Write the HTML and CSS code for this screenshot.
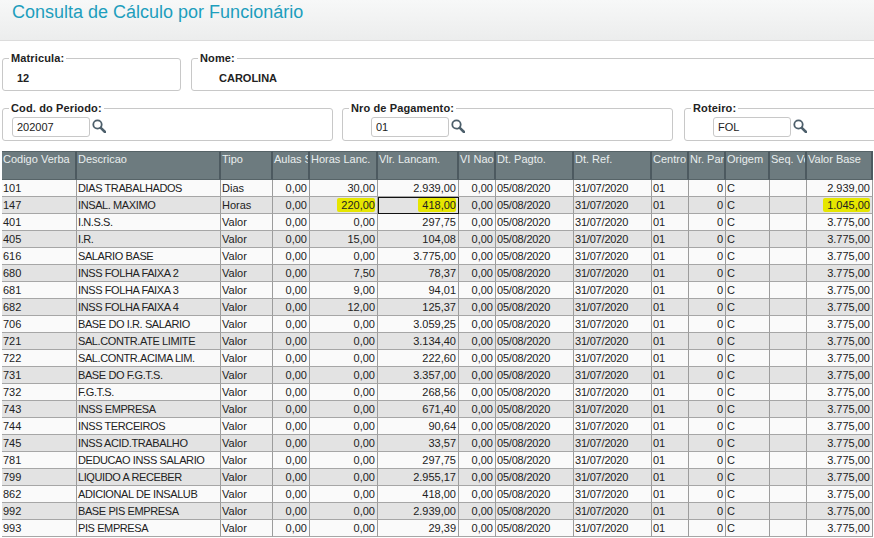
FILE: index.html
```html
<!DOCTYPE html>
<html lang="pt">
<head>
<meta charset="utf-8">
<title>Consulta de Cálculo por Funcionário</title>
<link rel="stylesheet" href="styles.css">
</head>
<body>
<header class="top"><h1>Consulta de Cálculo por Funcionário</h1></header>
<section class="forms">
  <div class="row row-a">
    <fieldset class="box w-mat"><legend>Matricula:</legend><span class="val v-mat">12</span></fieldset>
    <fieldset class="box w-nome"><legend>Nome:</legend><span class="val v-nome">CAROLINA</span></fieldset>
  </div>
  <div class="row row-b">
    <fieldset class="box w-cod"><legend>Cod. do Periodo:</legend>
      <div class="field f-cod"><input class="inp" value="202007" readonly><svg class="lens" viewBox="0 0 14 14"><circle cx="5.5" cy="5.5" r="4.2"/><path class="handle" d="M8.8 8.8 13 13"/></svg></div>
    </fieldset>
    <fieldset class="box w-nro"><legend>Nro de Pagamento:</legend>
      <div class="field f-nro"><input class="inp" value="01" readonly><svg class="lens" viewBox="0 0 14 14"><circle cx="5.5" cy="5.5" r="4.2"/><path class="handle" d="M8.8 8.8 13 13"/></svg></div>
    </fieldset>
    <fieldset class="box w-rot"><legend>Roteiro:</legend>
      <div class="field f-rot"><input class="inp" value="FOL" readonly><svg class="lens" viewBox="0 0 14 14"><circle cx="5.5" cy="5.5" r="4.2"/><path class="handle" d="M8.8 8.8 13 13"/></svg></div>
    </fieldset>
  </div>
</section>
<table class="grid">
<colgroup><col class="c1"><col class="c2"><col class="c3"><col class="c4"><col class="c5"><col class="c6"><col class="c7"><col class="c8"><col class="c9"><col class="c10"><col class="c11"><col class="c12"><col class="c13"><col class="c14"></colgroup>
<thead><tr><th>Codigo Verba</th><th>Descricao</th><th>Tipo</th><th>Aulas S</th><th>Horas Lanc.</th><th>Vlr. Lancam.</th><th>VI Nao.</th><th>Dt. Pagto.</th><th>Dt. Ref.</th><th>Centro</th><th>Nr. Parc</th><th>Origem</th><th>Seq. Ve</th><th>Valor Base</th></tr></thead>
<tbody>
<tr><td>101</td><td class="d">DIAS TRABALHADOS</td><td>Dias</td><td class="n">0,00</td><td class="n">30,00</td><td class="n">2.939,00</td><td class="n">0,00</td><td class="t">05/08/2020</td><td class="t">31/07/2020</td><td>01</td><td class="n">0</td><td>C</td><td></td><td class="n">2.939,00</td></tr>
<tr><td>147</td><td class="d">INSAL. MAXIMO</td><td>Horas</td><td class="n">0,00</td><td class="n"><mark>220,00</mark></td><td class="n sel"><mark>418,00</mark></td><td class="n">0,00</td><td class="t">05/08/2020</td><td class="t">31/07/2020</td><td>01</td><td class="n">0</td><td>C</td><td></td><td class="n"><mark>1.045,00</mark></td></tr>
<tr><td>401</td><td class="d">I.N.S.S.</td><td>Valor</td><td class="n">0,00</td><td class="n">0,00</td><td class="n">297,75</td><td class="n">0,00</td><td class="t">05/08/2020</td><td class="t">31/07/2020</td><td>01</td><td class="n">0</td><td>C</td><td></td><td class="n">3.775,00</td></tr>
<tr><td>405</td><td class="d">I.R.</td><td>Valor</td><td class="n">0,00</td><td class="n">15,00</td><td class="n">104,08</td><td class="n">0,00</td><td class="t">05/08/2020</td><td class="t">31/07/2020</td><td>01</td><td class="n">0</td><td>C</td><td></td><td class="n">3.775,00</td></tr>
<tr><td>616</td><td class="d">SALARIO BASE</td><td>Valor</td><td class="n">0,00</td><td class="n">0,00</td><td class="n">3.775,00</td><td class="n">0,00</td><td class="t">05/08/2020</td><td class="t">31/07/2020</td><td>01</td><td class="n">0</td><td>C</td><td></td><td class="n">3.775,00</td></tr>
<tr><td>680</td><td class="d">INSS FOLHA FAIXA 2</td><td>Valor</td><td class="n">0,00</td><td class="n">7,50</td><td class="n">78,37</td><td class="n">0,00</td><td class="t">05/08/2020</td><td class="t">31/07/2020</td><td>01</td><td class="n">0</td><td>C</td><td></td><td class="n">3.775,00</td></tr>
<tr><td>681</td><td class="d">INSS FOLHA FAIXA 3</td><td>Valor</td><td class="n">0,00</td><td class="n">9,00</td><td class="n">94,01</td><td class="n">0,00</td><td class="t">05/08/2020</td><td class="t">31/07/2020</td><td>01</td><td class="n">0</td><td>C</td><td></td><td class="n">3.775,00</td></tr>
<tr><td>682</td><td class="d">INSS FOLHA FAIXA 4</td><td>Valor</td><td class="n">0,00</td><td class="n">12,00</td><td class="n">125,37</td><td class="n">0,00</td><td class="t">05/08/2020</td><td class="t">31/07/2020</td><td>01</td><td class="n">0</td><td>C</td><td></td><td class="n">3.775,00</td></tr>
<tr><td>706</td><td class="d">BASE DO I.R. SALARIO</td><td>Valor</td><td class="n">0,00</td><td class="n">0,00</td><td class="n">3.059,25</td><td class="n">0,00</td><td class="t">05/08/2020</td><td class="t">31/07/2020</td><td>01</td><td class="n">0</td><td>C</td><td></td><td class="n">3.775,00</td></tr>
<tr><td>721</td><td class="d">SAL.CONTR.ATE LIMITE</td><td>Valor</td><td class="n">0,00</td><td class="n">0,00</td><td class="n">3.134,40</td><td class="n">0,00</td><td class="t">05/08/2020</td><td class="t">31/07/2020</td><td>01</td><td class="n">0</td><td>C</td><td></td><td class="n">3.775,00</td></tr>
<tr><td>722</td><td class="d">SAL.CONTR.ACIMA LIM.</td><td>Valor</td><td class="n">0,00</td><td class="n">0,00</td><td class="n">222,60</td><td class="n">0,00</td><td class="t">05/08/2020</td><td class="t">31/07/2020</td><td>01</td><td class="n">0</td><td>C</td><td></td><td class="n">3.775,00</td></tr>
<tr><td>731</td><td class="d">BASE DO F.G.T.S.</td><td>Valor</td><td class="n">0,00</td><td class="n">0,00</td><td class="n">3.357,00</td><td class="n">0,00</td><td class="t">05/08/2020</td><td class="t">31/07/2020</td><td>01</td><td class="n">0</td><td>C</td><td></td><td class="n">3.775,00</td></tr>
<tr><td>732</td><td class="d">F.G.T.S.</td><td>Valor</td><td class="n">0,00</td><td class="n">0,00</td><td class="n">268,56</td><td class="n">0,00</td><td class="t">05/08/2020</td><td class="t">31/07/2020</td><td>01</td><td class="n">0</td><td>C</td><td></td><td class="n">3.775,00</td></tr>
<tr><td>743</td><td class="d">INSS EMPRESA</td><td>Valor</td><td class="n">0,00</td><td class="n">0,00</td><td class="n">671,40</td><td class="n">0,00</td><td class="t">05/08/2020</td><td class="t">31/07/2020</td><td>01</td><td class="n">0</td><td>C</td><td></td><td class="n">3.775,00</td></tr>
<tr><td>744</td><td class="d">INSS TERCEIROS</td><td>Valor</td><td class="n">0,00</td><td class="n">0,00</td><td class="n">90,64</td><td class="n">0,00</td><td class="t">05/08/2020</td><td class="t">31/07/2020</td><td>01</td><td class="n">0</td><td>C</td><td></td><td class="n">3.775,00</td></tr>
<tr><td>745</td><td class="d">INSS ACID.TRABALHO</td><td>Valor</td><td class="n">0,00</td><td class="n">0,00</td><td class="n">33,57</td><td class="n">0,00</td><td class="t">05/08/2020</td><td class="t">31/07/2020</td><td>01</td><td class="n">0</td><td>C</td><td></td><td class="n">3.775,00</td></tr>
<tr><td>781</td><td class="d">DEDUCAO INSS SALARIO</td><td>Valor</td><td class="n">0,00</td><td class="n">0,00</td><td class="n">297,75</td><td class="n">0,00</td><td class="t">05/08/2020</td><td class="t">31/07/2020</td><td>01</td><td class="n">0</td><td>C</td><td></td><td class="n">3.775,00</td></tr>
<tr><td>799</td><td class="d">LIQUIDO A RECEBER</td><td>Valor</td><td class="n">0,00</td><td class="n">0,00</td><td class="n">2.955,17</td><td class="n">0,00</td><td class="t">05/08/2020</td><td class="t">31/07/2020</td><td>01</td><td class="n">0</td><td>C</td><td></td><td class="n">3.775,00</td></tr>
<tr><td>862</td><td class="d">ADICIONAL DE INSALUB</td><td>Valor</td><td class="n">0,00</td><td class="n">0,00</td><td class="n">418,00</td><td class="n">0,00</td><td class="t">05/08/2020</td><td class="t">31/07/2020</td><td>01</td><td class="n">0</td><td>C</td><td></td><td class="n">3.775,00</td></tr>
<tr><td>992</td><td class="d">BASE PIS EMPRESA</td><td>Valor</td><td class="n">0,00</td><td class="n">0,00</td><td class="n">2.939,00</td><td class="n">0,00</td><td class="t">05/08/2020</td><td class="t">31/07/2020</td><td>01</td><td class="n">0</td><td>C</td><td></td><td class="n">3.775,00</td></tr>
<tr><td>993</td><td class="d">PIS EMPRESA</td><td>Valor</td><td class="n">0,00</td><td class="n">0,00</td><td class="n">29,39</td><td class="n">0,00</td><td class="t">05/08/2020</td><td class="t">31/07/2020</td><td>01</td><td class="n">0</td><td>C</td><td></td><td class="n">3.775,00</td></tr>
</tbody>
</table>
</body>
</html>
```
FILE: styles.css
```css
html, body { margin: 0; padding: 0; background: #fff; overflow: hidden; width: 874px; height: 538px; }
body { font-family: "Liberation Sans", Arial, sans-serif; color: #222; }
.top { height: 40px; background: linear-gradient(#f7f8f8, #eceded); border-bottom: 1px solid #dcdcdc; }
.top h1 { margin: 0; padding: 1px 0 0 12px; font-size: 18px; line-height: 22px; font-weight: 400; color: #1d9ebd; }
.forms { padding: 0 0 0 2px; }
.row { display: flex; }
.row-a { margin-top: 11px; height: 39px; }
.row-b { margin-top: 11px; height: 39px; }
.box { margin: 0; padding: 0; border: 1px solid #c8c8c8; border-radius: 3px; box-sizing: border-box; height: 39px; flex: none; }
.box legend { margin-left: 6px; padding: 0 2px; font-size: 11px; line-height: 13px; font-weight: 700; color: #222; letter-spacing: .13px; }
.w-mat { width: 179px; margin-right: 10px; }
.w-nome { width: 700px; }
.w-cod { width: 331px; margin-right: 9px; }
.w-nro { width: 331px; margin-right: 11px; }
.w-rot { width: 200px; }
.val { display: block; font-size: 11px; font-weight: 700; line-height: 18px; margin-top: 4px; }
.v-mat { padding-left: 14px; }
.v-nome { padding-left: 27px; }
.field { display: flex; align-items: center; gap: 2px; margin-top: 2px; }
.f-cod { padding-left: 9px; }
.f-nro { padding-left: 28px; }
.f-rot { padding-left: 28px; }
.inp { box-sizing: border-box; width: 78px; height: 20px; border: 1px solid #c8c8c8; border-radius: 3px; padding: 0 4px; font: 11px "Liberation Sans", Arial, sans-serif; color: #222; background: #fff; outline: none; }
.lens { width: 14px; height: 14px; fill: none; stroke: #4d5f6b; stroke-width: 1.8; flex: none; margin-bottom: 2px; }
.lens .handle { stroke-width: 2.6; stroke-linecap: round; }
.grid { margin: 10px 0 0 2px; border-collapse: separate; border-spacing: 0; table-layout: fixed; width: 871px; font-size: 11px; }
.c1 { width: 75px; } .c2 { width: 144px; } .c3 { width: 52px; } .c4 { width: 37px; } .c5 { width: 68px; } .c6 { width: 81px; } .c7 { width: 37px; } .c8 { width: 78px; } .c9 { width: 78px; } .c10 { width: 37px; } .c11 { width: 37px; } .c12 { width: 44px; } .c13 { width: 37px; } .c14 { width: 66px; }
.grid th { box-sizing: border-box; height: 29px; background: #6d7b7f; color: #e9eeee; font-weight: 400; text-align: left; vertical-align: top; padding: 1px 0 0 1px; line-height: 13px; white-space: nowrap; overflow: hidden; border-right: 2px solid #4d5a60; border-top: 1px solid #566367; border-bottom: 1px solid #566367; }
.grid td { box-sizing: border-box; height: 17px; padding: 0 1px; line-height: 15px; white-space: nowrap; overflow: hidden; border-right: 1px solid #9c9c9c; border-bottom: 1px solid #a6a6a6; color: #222; }
.grid tbody tr:nth-child(odd) td { background: #fafafa; }
.grid tbody tr:nth-child(even) td { background: #e3e3e3; }
.grid td.n { text-align: right; padding-right: 2px; }
.grid td.d { letter-spacing: -.4px; }
.grid td.t { letter-spacing: -.2px; }
.grid td.sel { outline: 1px solid #111; outline-offset: -1px; }
mark { background: #e6e600; color: #222; padding: 1px 0 1px 4px; border-radius: 2px; }
```
